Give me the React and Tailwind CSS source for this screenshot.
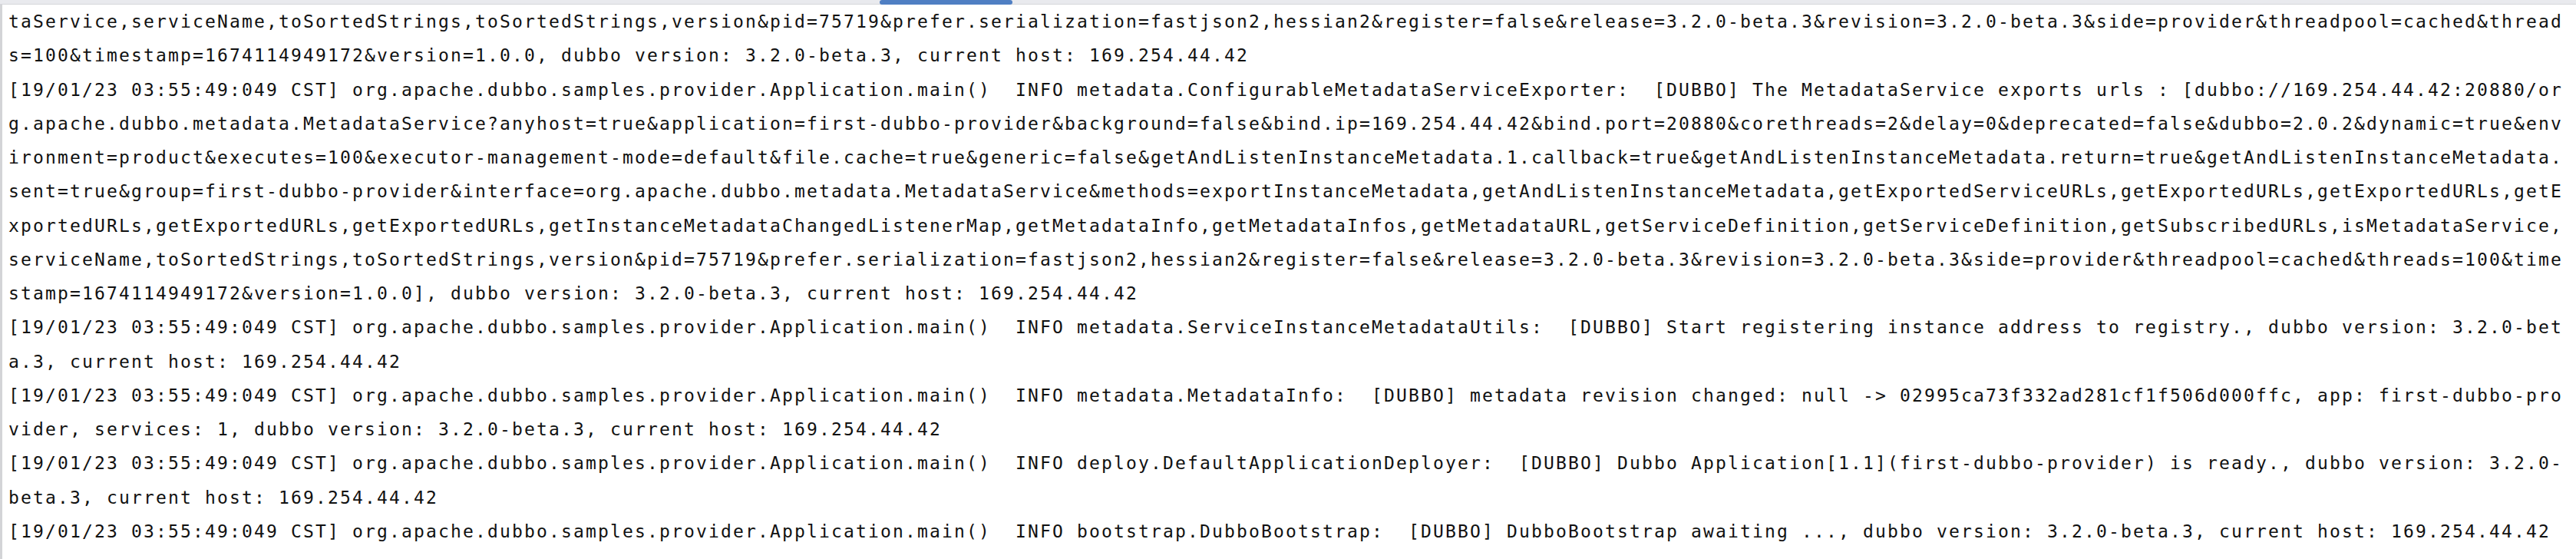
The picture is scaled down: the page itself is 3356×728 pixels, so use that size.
import React from "react";

const WRAP = 208;

const entries = [
  "taService,serviceName,toSortedStrings,toSortedStrings,version&pid=75719&prefer.serialization=fastjson2,hessian2&register=false&release=3.2.0-beta.3&revision=3.2.0-beta.3&side=provider&threadpool=cached&threads=100&timestamp=1674114949172&version=1.0.0, dubbo version: 3.2.0-beta.3, current host: 169.254.44.42",
  "[19/01/23 03:55:49:049 CST] org.apache.dubbo.samples.provider.Application.main()  INFO metadata.ConfigurableMetadataServiceExporter:  [DUBBO] The MetadataService exports urls : [dubbo://169.254.44.42:20880/org.apache.dubbo.metadata.MetadataService?anyhost=true&application=first-dubbo-provider&background=false&bind.ip=169.254.44.42&bind.port=20880&corethreads=2&delay=0&deprecated=false&dubbo=2.0.2&dynamic=true&environment=product&executes=100&executor-management-mode=default&file.cache=true&generic=false&getAndListenInstanceMetadata.1.callback=true&getAndListenInstanceMetadata.return=true&getAndListenInstanceMetadata.sent=true&group=first-dubbo-provider&interface=org.apache.dubbo.metadata.MetadataService&methods=exportInstanceMetadata,getAndListenInstanceMetadata,getExportedServiceURLs,getExportedURLs,getExportedURLs,getExportedURLs,getExportedURLs,getExportedURLs,getInstanceMetadataChangedListenerMap,getMetadataInfo,getMetadataInfos,getMetadataURL,getServiceDefinition,getServiceDefinition,getSubscribedURLs,isMetadataService,serviceName,toSortedStrings,toSortedStrings,version&pid=75719&prefer.serialization=fastjson2,hessian2&register=false&release=3.2.0-beta.3&revision=3.2.0-beta.3&side=provider&threadpool=cached&threads=100&timestamp=1674114949172&version=1.0.0], dubbo version: 3.2.0-beta.3, current host: 169.254.44.42",
  "[19/01/23 03:55:49:049 CST] org.apache.dubbo.samples.provider.Application.main()  INFO metadata.ServiceInstanceMetadataUtils:  [DUBBO] Start registering instance address to registry., dubbo version: 3.2.0-beta.3, current host: 169.254.44.42",
  "[19/01/23 03:55:49:049 CST] org.apache.dubbo.samples.provider.Application.main()  INFO metadata.MetadataInfo:  [DUBBO] metadata revision changed: null -> 02995ca73f332ad281cf1f506d000ffc, app: first-dubbo-provider, services: 1, dubbo version: 3.2.0-beta.3, current host: 169.254.44.42",
  "[19/01/23 03:55:49:049 CST] org.apache.dubbo.samples.provider.Application.main()  INFO deploy.DefaultApplicationDeployer:  [DUBBO] Dubbo Application[1.1](first-dubbo-provider) is ready., dubbo version: 3.2.0-beta.3, current host: 169.254.44.42",
  "[19/01/23 03:55:49:049 CST] org.apache.dubbo.samples.provider.Application.main()  INFO bootstrap.DubboBootstrap:  [DUBBO] DubboBootstrap awaiting ..., dubbo version: 3.2.0-beta.3, current host: 169.254.44.42",
];

// console soft-wrap: fixed column count
function softWrap(text) {
  const rows = [];
  for (let i = 0; i < text.length; i += WRAP) rows.push(text.slice(i, i + WRAP));
  return rows;
}

export default function App() {
  return (
    <div className="h-[728px] w-full overflow-hidden bg-white">
      {/* horizontal scrollbar */}
      <div className="h-[6px] border-b border-[#d6d7db] bg-[#e9eaee]">
        <div className="ml-[1146px] h-[6px] w-[173px] rounded-full bg-[#4f7fc3]" />
      </div>

      <div className="flex h-full">
        <div className="w-[3px] shrink-0 bg-[#d3d4d7]" />
        <div className="pl-[8px] font-['DejaVu_Sans_Mono',monospace] text-[23px] leading-[44.25px] tracking-[2.153px] text-[#111]">
          {entries.map((entry, idx) => (
            <div key={idx}>
              {softWrap(entry).map((row, j) => (
                <div key={j} className="whitespace-pre">{row}</div>
              ))}
            </div>
          ))}
        </div>
      </div>
    </div>
  );
}
